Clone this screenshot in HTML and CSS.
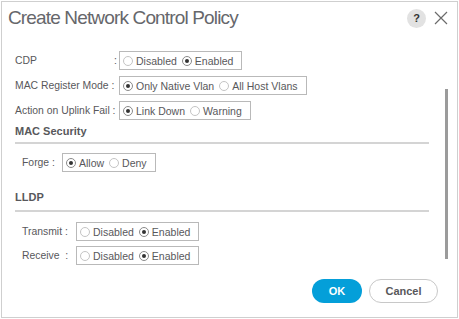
FILE: index.html
```html
<!DOCTYPE html>
<html>
<head>
<meta charset="utf-8">
<link rel="stylesheet" href="styles.css">
</head>
<body>
<div class="dialog">
  <div class="header">
    <div class="title">Create Network Control Policy</div>
    <div class="tools">
      <span class="help">?</span>
      <svg class="close" width="14" height="14" viewBox="0 0 14 14"><path d="M1 1 L13 13 M13 1 L1 13" stroke="#6b6b6b" stroke-width="1.2" fill="none"/></svg>
    </div>
  </div>
  <div class="body">
    <div class="content">
      <div class="row">
        <span class="label w1"><span>CDP</span><span class="colon">:</span></span>
        <div class="group"><span class="opt"><i class="radio"></i>Disabled</span><span class="opt"><i class="radio on"></i>Enabled</span></div>
      </div>
      <div class="row">
        <span class="label w1"><span>MAC Register Mode :</span></span>
        <div class="group"><span class="opt"><i class="radio on"></i>Only Native Vlan</span><span class="opt"><i class="radio"></i>All Host Vlans</span></div>
      </div>
      <div class="row">
        <span class="label w1"><span>Action on Uplink Fail :</span></span>
        <div class="group"><span class="opt"><i class="radio on"></i>Link Down</span><span class="opt"><i class="radio"></i>Warning</span></div>
      </div>
      <div class="section mac">MAC Security</div>
      <div class="sub">
        <div class="row">
          <span class="label w3">Forge :</span>
          <div class="group"><span class="opt"><i class="radio on"></i>Allow</span><span class="opt"><i class="radio"></i>Deny</span></div>
        </div>
      </div>
      <div class="section lldp">LLDP</div>
      <div class="sub sub2">
        <div class="row">
          <span class="label w2">Transmit :</span>
          <div class="group"><span class="opt"><i class="radio"></i>Disabled</span><span class="opt"><i class="radio on"></i>Enabled</span></div>
        </div>
        <div class="row">
          <span class="label w2">Receive &nbsp;:</span>
          <div class="group"><span class="opt"><i class="radio"></i>Disabled</span><span class="opt"><i class="radio on"></i>Enabled</span></div>
        </div>
      </div>
    </div>
    <div class="track"><div class="thumb"></div></div>
  </div>
  <div class="footer">
    <button class="btn ok">OK</button>
    <button class="btn cancel">Cancel</button>
  </div>
</div>
</body>
</html>
```
FILE: styles.css
```css
* { box-sizing: border-box; }
html, body { margin: 0; padding: 0; background: #fff; }
body { font-family: "Liberation Sans", Arial, sans-serif; color: #58585b; }
.dialog {
  margin: 1px 0 0 1px;
  width: 457px;
  height: 317px;
  border: 1px solid #cfcfcf;
  display: flex;
  flex-direction: column;
}
.header {
  display: flex;
  align-items: center;
  justify-content: space-between;
  padding: 1px 9px 0 6px;
  height: 31px;
}
.title {
  font-family: "Liberation Sans", Arial, sans-serif;
  font-size: 19px;
  color: #66676b;
  letter-spacing: -0.85px;
}
.tools { display: flex; align-items: center; gap: 8px; }
.help {
  width: 19px; height: 19px; border-radius: 50%;
  background: #e2e2e2;
  color: #333;
  font-weight: bold;
  font-size: 11px;
  display: flex; align-items: center; justify-content: center;
}
.close { display: block; }
.body {
  display: flex;
  flex: 1;
  padding-top: 18px;
}
.content { flex: 1; padding-left: 13px; }
.row {
  display: flex;
  align-items: center;
  height: 19px;
  margin-bottom: 6px;
  font-size: 10.5px;
}
.label { white-space: nowrap; font-size: 10.4px; }
.w1 { width: 104px; display: flex; justify-content: space-between; padding-right: 2px; }
.w2 { width: 54px; }
.w3 { width: 40px; }
.group {
  display: flex;
  align-items: center;
  height: 19px;
  border: 1px solid #b9b9b9;
  padding: 0 8px 0 3px;
  gap: 5px;
  color: #58585b;
}
.opt { display: flex; align-items: center; white-space: nowrap; }
.radio {
  width: 10px; height: 10px; border-radius: 50%;
  border: 1px solid #c4c4c4;
  margin-right: 3px;
  display: flex; align-items: center; justify-content: center;
}
.radio.on { border-color: #8a8a8a; }
.radio.on::after {
  content: ""; width: 4px; height: 4px; border-radius: 50%; background: #333;
}
.section {
  font-size: 11px;
  font-weight: bold;
  color: #58585b;
  border-bottom: 2px solid #d4d4d4;
  margin-right: 2px;
  line-height: 13px;
}
.mac { margin-top: -1px; height: 19px; }
.lldp { margin-top: 19px; height: 21px; }
.sub { padding: 9px 0 0 7px; }
.sub2 { padding-top: 10px; }
.sub2 .row { margin-bottom: 5px; }
.track { width: 26px; padding-top: 38px; padding-left: 14px; }
.thumb { width: 3px; height: 170px; background: #9b9b9b; }
.footer {
  display: flex;
  justify-content: flex-end;
  gap: 7px;
  padding: 0 19px 14px 0;
}
.btn {
  height: 24px;
  border-radius: 12px;
  font-family: "Liberation Sans", Arial, sans-serif;
  font-size: 11px;
  font-weight: bold;
  cursor: pointer;
}
.ok { width: 50px; background: #049fd9; color: #fff; border: none; }
.cancel { width: 69px; background: #fff; color: #58585b; border: 1px solid #c8c8c8; }
```
